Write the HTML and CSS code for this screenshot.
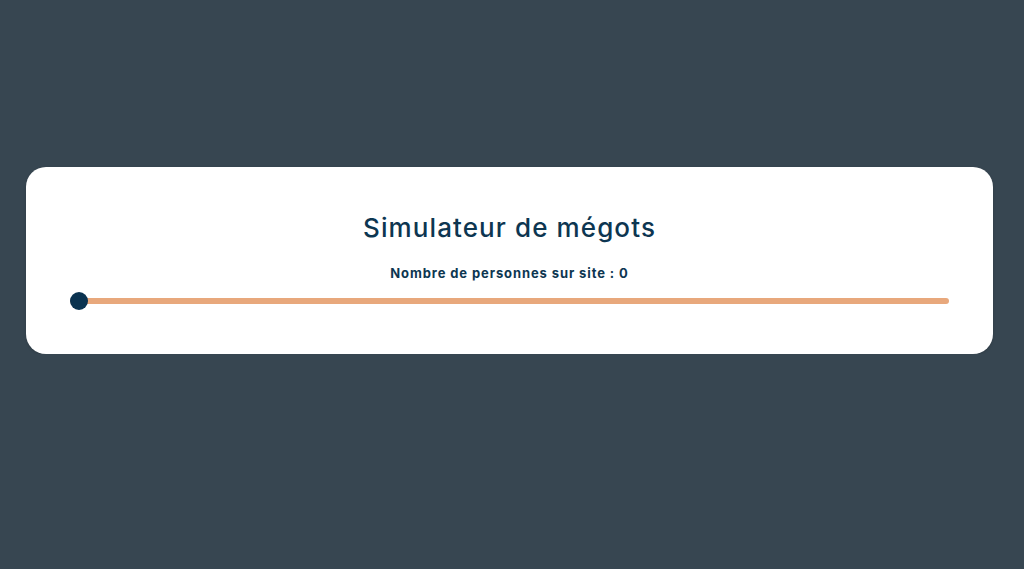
FILE: index.html
```html
<!DOCTYPE html>
<html lang="fr">
<head>
    <meta charset="UTF-8">
    <meta name="viewport" content="width=device-width, initial-scale=1.0">
    <title>Simulateur de mégots</title>
    <link rel="stylesheet" href="styles.css">
</head>
<body>
    <div class="card">
        <h2 class="card-title">Simulateur de mégots</h2>
        <label class="people-label" for="people">Nombre de personnes sur site : <span id="peopleCount">0</span></label>
        <input type="range" id="people" class="slider" min="0" max="1000" value="0">
    </div>

    <script>
        const slider = document.getElementById("people");
        const count = document.getElementById("peopleCount");
        slider.addEventListener("input", function() {
            count.textContent = slider.value;
        });
    </script>
</body>
</html>
```

FILE: styles.css
```css
body {
    font-family: Inter, "Noto Sans", sans-serif;
    background-color: #374651;
    margin: 0;
    padding: 167px 31px 0 26px;
}
.card {
    background-color: #ffffff;
    border-radius: 20px;
    padding: 43px 44px 44px;
    display: flex;
    flex-direction: column;
    align-items: center;
    box-shadow: 0 1px 3px rgba(0,0,0,0.15);
}
.card-title {
    margin: 0;
    font-size: 26px;
    font-weight: 500;
    letter-spacing: 1.1px;
    color: #0d3651;
    line-height: 36px;
}
.people-label {
    margin-top: 19px;
    font-size: 13px;
    font-weight: 700;
    letter-spacing: 0.9px;
    color: #0d3651;
    line-height: 16px;
}
.slider {
    -webkit-appearance: none;
    appearance: none;
    width: 100%;
    height: 18px;
    margin: 11px 0 0;
    background: transparent;
}
.slider::-webkit-slider-runnable-track {
    height: 6px;
    background: #e8a87c;
    border-radius: 3px;
}
.slider::-webkit-slider-thumb {
    -webkit-appearance: none;
    width: 18px;
    height: 18px;
    margin-top: -6px;
    border-radius: 50%;
    background: #0a3350;
    cursor: pointer;
}
```
